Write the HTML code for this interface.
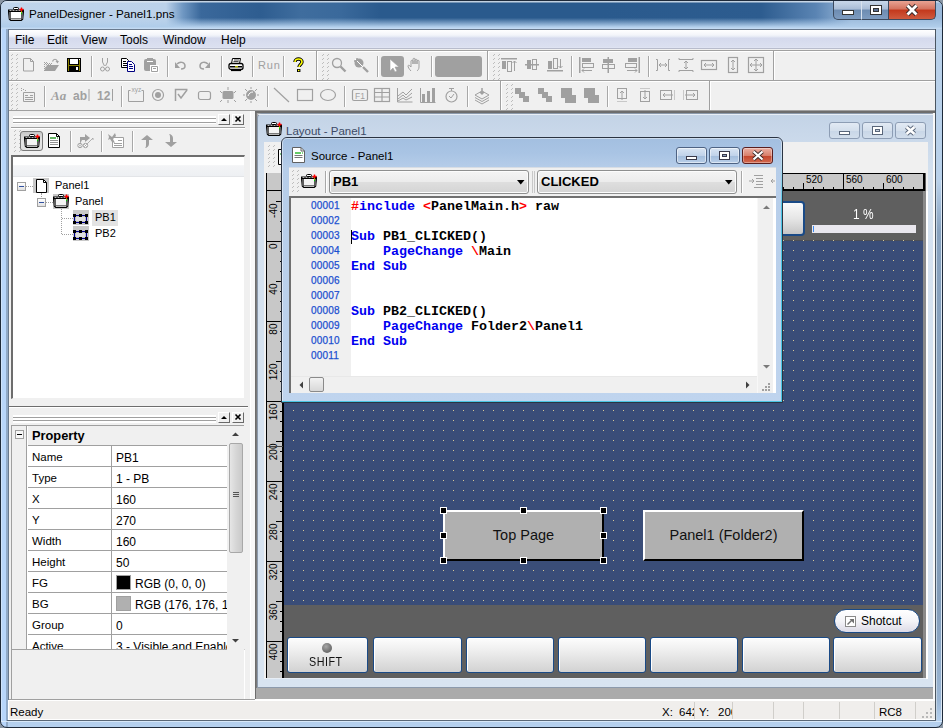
<!DOCTYPE html>
<html><head><meta charset="utf-8">
<style>
*{box-sizing:border-box;margin:0;padding:0}
html,body{width:943px;height:728px;overflow:hidden;background:#8a96a4;font-family:"Liberation Sans",sans-serif;font-size:12px;color:#000}
.a{position:absolute}
#frame{left:0;top:0;width:943px;height:728px;border:1px solid #1e2a3a;border-radius:7px 7px 7px 7px;background:linear-gradient(90deg,#e8f2fc 0,#b8d6fa 1px,#b8d6fa 5px,#6a7e95 6px,#b8d6fa 7px,transparent 7px),linear-gradient(180deg,#b9d1ea 0,#b9d1ea 180px,#88a2be 230px,#829cb8 600px,#9bb6d4 700px,#b5d0ee 720px)}
#title{left:1px;top:1px;width:941px;height:28px;border-radius:6px 6px 0 0;
background:linear-gradient(180deg,rgba(220,230,240,.85) 0,rgba(220,230,240,.85) 1px,rgba(185,209,234,0) 2px,rgba(185,209,234,0) 60%,rgba(176,205,234,1) 92%,rgba(200,222,245,1) 100%),
linear-gradient(90deg,#c0d5ec 0,#bcd2ea 165px,#6f97c2 182px,#3a689b 200px,#2e5d90 260px,#3f6d9e 300px,#3a699b 340px,#2a5a8d 380px,#2a5a8d 600px,#2d5c8f 760px,#5a84b3 815px,#9ab9da 850px)}
#titletxt{left:29px;top:7px;font-size:11.7px;color:#000;white-space:nowrap}
.cb{top:1px;height:19px;border:1px solid #3c4a5e;border-top:none}
#client{left:8px;top:29px;width:928px;height:691px;background:#f0f0f0;border:1px solid #6a7a8e}
#menubar{left:9px;top:30px;width:926px;height:19px;background:linear-gradient(180deg,#ffffff 0,#f3f5fa 5px,#e4e8f4 7px,#d5daed 8px,#dbe0f0 17px,#e2e6f4 18px);border-bottom:1px solid #b8bccc}
.mi{top:33px;font-size:12px;color:#000}
.grip{background-image:linear-gradient(135deg,transparent 1px,transparent 0),radial-gradient(circle at 1px 1px,#a0a0a0 0.8px,transparent 1.1px);background-size:5px 4px;background-position:1px 1px}
svg{position:absolute;overflow:visible}
.ic{width:16px;height:16px}
</style></head><body>
<div id="frame" class="a"></div>
<div class="a" style="left:936px;top:180px;width:1px;height:540px;background:#c4d4e4"></div><div class="a" style="left:941px;top:180px;width:1px;height:540px;background:#dce8f4"></div><div class="a" style="left:1px;top:721px;width:941px;height:1px;background:#d8e8f8"></div>
<div id="title" class="a"></div>
<svg style="left:8px;top:7px" width="16" height="16" viewBox="0 0 16 16"><rect x="5.5" y="0.5" width="5" height="2" rx="1" fill="#fff" stroke="#000"/><path d="M0 2.5h16v2.5l-0.8 7.5l-1.7 1.5h-11l-1.7-1.5l-0.8-7.5z" fill="#000"/><path d="M1.5 3.5h12" stroke="#e0e0e0" stroke-width=".8" stroke-dasharray="2 1"/><path d="M2 5v6.5l1 1h10l1-1V5" fill="none" stroke="#e8e8e8" stroke-width=".8"/><rect x="3" y="5" width="10" height="6.5" fill="#fff"/><path d="M13.5 0.5v4M11.5 2.5h4" stroke="#f00" stroke-width="1.4"/><rect x="13" y="4.5" width="1" height="1.2" fill="#ee0"/><rect x="13" y="5.7" width="1" height="1.5" fill="#0c0"/></svg>
<div id="titletxt" class="a">PanelDesigner - Panel1.pns</div>
<div class="a cb" style="left:833px;width:29px;border-radius:0 0 0 5px;background:linear-gradient(180deg,#c9d8ea 0,#a9bdd6 45%,#6d8cb2 50%,#7e9cc0 100%)"></div>
<div class="a cb" style="left:861px;width:28px;border-left:1px solid #d8e2ee;background:linear-gradient(180deg,#c9d8ea 0,#a9bdd6 45%,#6d8cb2 50%,#7e9cc0 100%)"></div>
<div class="a cb" style="left:888px;width:48px;border-radius:0 0 5px 0;background:linear-gradient(180deg,#e8a393 0,#d4725e 45%,#c3381c 50%,#cf5b3f 100%)"></div>
<div class="a" style="left:842px;top:10px;width:12px;height:5px;background:#fff;border:1px solid #333"></div>
<div class="a" style="left:870px;top:5px;width:12px;height:10px;background:#fff;border:1px solid #333"></div>
<div class="a" style="left:873px;top:8px;width:6px;height:4px;background:#5a7094;border:1px solid #333"></div>
<svg style="left:905px;top:4px" width="14" height="12" viewBox="0 0 14 12"><path d="M2.5 1.5 L11.5 10.5 M11.5 1.5 L2.5 10.5" stroke="#3a2a2a" stroke-width="4.6"/><path d="M2.5 1.5 L11.5 10.5 M11.5 1.5 L2.5 10.5" stroke="#fff" stroke-width="2.8"/></svg>
<div id="client" class="a"></div>
<div id="menubar" class="a"></div>
<div class="a mi" style="left:15px">File</div>
<div class="a mi" style="left:47px">Edit</div>
<div class="a mi" style="left:81px">View</div>
<div class="a mi" style="left:120px">Tools</div>
<div class="a mi" style="left:163px">Window</div>
<div class="a mi" style="left:221px">Help</div>
<div class="a" style="left:9px;top:49px;width:926px;height:1px;background:#f0f0f0"></div><div class="a" style="left:9px;top:50px;width:926px;height:1px;background:#a0a0a0"></div><div class="a" style="left:9px;top:51px;width:926px;height:29px;background:#f0f0f0;border-top:1px solid #fff"></div>
<div class="a" style="left:9px;top:80px;width:926px;height:1px;background:#a0a0a0"></div>
<div class="a" style="left:9px;top:81px;width:926px;height:29px;background:#f0f0f0;border-top:1px solid #fff"></div>
<div class="a" style="left:9px;top:110px;width:926px;height:1px;background:#a0a0a0"></div>
<svg style="left:10px;top:54px" width="8" height="28" fill="#bdbdbd"><rect x="2" y="0" width="1" height="1"/><rect x="1" y="1" width="1" height="1"/><rect x="7" y="0" width="1" height="1"/><rect x="6" y="1" width="1" height="1"/><rect x="2" y="4" width="1" height="1"/><rect x="1" y="5" width="1" height="1"/><rect x="7" y="4" width="1" height="1"/><rect x="6" y="5" width="1" height="1"/><rect x="2" y="8" width="1" height="1"/><rect x="1" y="9" width="1" height="1"/><rect x="7" y="8" width="1" height="1"/><rect x="6" y="9" width="1" height="1"/><rect x="2" y="12" width="1" height="1"/><rect x="1" y="13" width="1" height="1"/><rect x="7" y="12" width="1" height="1"/><rect x="6" y="13" width="1" height="1"/><rect x="2" y="16" width="1" height="1"/><rect x="1" y="17" width="1" height="1"/><rect x="7" y="16" width="1" height="1"/><rect x="6" y="17" width="1" height="1"/><rect x="2" y="20" width="1" height="1"/><rect x="1" y="21" width="1" height="1"/><rect x="7" y="20" width="1" height="1"/><rect x="6" y="21" width="1" height="1"/><rect x="2" y="24" width="1" height="1"/><rect x="1" y="25" width="1" height="1"/><rect x="7" y="24" width="1" height="1"/><rect x="6" y="25" width="1" height="1"/></svg>
<svg style="left:321px;top:54px" width="8" height="28" fill="#bdbdbd"><rect x="2" y="0" width="1" height="1"/><rect x="1" y="1" width="1" height="1"/><rect x="7" y="0" width="1" height="1"/><rect x="6" y="1" width="1" height="1"/><rect x="2" y="4" width="1" height="1"/><rect x="1" y="5" width="1" height="1"/><rect x="7" y="4" width="1" height="1"/><rect x="6" y="5" width="1" height="1"/><rect x="2" y="8" width="1" height="1"/><rect x="1" y="9" width="1" height="1"/><rect x="7" y="8" width="1" height="1"/><rect x="6" y="9" width="1" height="1"/><rect x="2" y="12" width="1" height="1"/><rect x="1" y="13" width="1" height="1"/><rect x="7" y="12" width="1" height="1"/><rect x="6" y="13" width="1" height="1"/><rect x="2" y="16" width="1" height="1"/><rect x="1" y="17" width="1" height="1"/><rect x="7" y="16" width="1" height="1"/><rect x="6" y="17" width="1" height="1"/><rect x="2" y="20" width="1" height="1"/><rect x="1" y="21" width="1" height="1"/><rect x="7" y="20" width="1" height="1"/><rect x="6" y="21" width="1" height="1"/><rect x="2" y="24" width="1" height="1"/><rect x="1" y="25" width="1" height="1"/><rect x="7" y="24" width="1" height="1"/><rect x="6" y="25" width="1" height="1"/></svg>
<svg style="left:492px;top:54px" width="8" height="28" fill="#bdbdbd"><rect x="2" y="0" width="1" height="1"/><rect x="1" y="1" width="1" height="1"/><rect x="7" y="0" width="1" height="1"/><rect x="6" y="1" width="1" height="1"/><rect x="2" y="4" width="1" height="1"/><rect x="1" y="5" width="1" height="1"/><rect x="7" y="4" width="1" height="1"/><rect x="6" y="5" width="1" height="1"/><rect x="2" y="8" width="1" height="1"/><rect x="1" y="9" width="1" height="1"/><rect x="7" y="8" width="1" height="1"/><rect x="6" y="9" width="1" height="1"/><rect x="2" y="12" width="1" height="1"/><rect x="1" y="13" width="1" height="1"/><rect x="7" y="12" width="1" height="1"/><rect x="6" y="13" width="1" height="1"/><rect x="2" y="16" width="1" height="1"/><rect x="1" y="17" width="1" height="1"/><rect x="7" y="16" width="1" height="1"/><rect x="6" y="17" width="1" height="1"/><rect x="2" y="20" width="1" height="1"/><rect x="1" y="21" width="1" height="1"/><rect x="7" y="20" width="1" height="1"/><rect x="6" y="21" width="1" height="1"/><rect x="2" y="24" width="1" height="1"/><rect x="1" y="25" width="1" height="1"/><rect x="7" y="24" width="1" height="1"/><rect x="6" y="25" width="1" height="1"/></svg>
<div class="a" style="left:91px;top:56px;width:1px;height:21px;background:#a8a8a8"></div><div class="a" style="left:92px;top:56px;width:1px;height:21px;background:#fff"></div>
<div class="a" style="left:167px;top:56px;width:1px;height:21px;background:#a8a8a8"></div><div class="a" style="left:168px;top:56px;width:1px;height:21px;background:#fff"></div>
<div class="a" style="left:221px;top:56px;width:1px;height:21px;background:#a8a8a8"></div><div class="a" style="left:222px;top:56px;width:1px;height:21px;background:#fff"></div>
<div class="a" style="left:252px;top:56px;width:1px;height:21px;background:#a8a8a8"></div><div class="a" style="left:253px;top:56px;width:1px;height:21px;background:#fff"></div>
<div class="a" style="left:283px;top:56px;width:1px;height:21px;background:#a8a8a8"></div><div class="a" style="left:284px;top:56px;width:1px;height:21px;background:#fff"></div>
<div class="a" style="left:377px;top:56px;width:1px;height:21px;background:#a8a8a8"></div><div class="a" style="left:378px;top:56px;width:1px;height:21px;background:#fff"></div>
<div class="a" style="left:431px;top:56px;width:1px;height:21px;background:#a8a8a8"></div><div class="a" style="left:432px;top:56px;width:1px;height:21px;background:#fff"></div>
<div class="a" style="left:571px;top:56px;width:1px;height:21px;background:#a8a8a8"></div><div class="a" style="left:572px;top:56px;width:1px;height:21px;background:#fff"></div>
<div class="a" style="left:648px;top:56px;width:1px;height:21px;background:#a8a8a8"></div><div class="a" style="left:649px;top:56px;width:1px;height:21px;background:#fff"></div>
<div class="a" style="left:316px;top:51px;width:1px;height:29px;background:#a0a0a0"></div><div class="a" style="left:317px;top:51px;width:1px;height:29px;background:#fff"></div>
<div class="a" style="left:487px;top:51px;width:1px;height:29px;background:#a0a0a0"></div><div class="a" style="left:488px;top:51px;width:1px;height:29px;background:#fff"></div>
<div class="a" style="left:773px;top:51px;width:1px;height:29px;background:#a0a0a0"></div><div class="a" style="left:774px;top:51px;width:1px;height:29px;background:#fff"></div>
<svg style="left:10px;top:84px" width="8" height="28" fill="#bdbdbd"><rect x="2" y="0" width="1" height="1"/><rect x="1" y="1" width="1" height="1"/><rect x="7" y="0" width="1" height="1"/><rect x="6" y="1" width="1" height="1"/><rect x="2" y="4" width="1" height="1"/><rect x="1" y="5" width="1" height="1"/><rect x="7" y="4" width="1" height="1"/><rect x="6" y="5" width="1" height="1"/><rect x="2" y="8" width="1" height="1"/><rect x="1" y="9" width="1" height="1"/><rect x="7" y="8" width="1" height="1"/><rect x="6" y="9" width="1" height="1"/><rect x="2" y="12" width="1" height="1"/><rect x="1" y="13" width="1" height="1"/><rect x="7" y="12" width="1" height="1"/><rect x="6" y="13" width="1" height="1"/><rect x="2" y="16" width="1" height="1"/><rect x="1" y="17" width="1" height="1"/><rect x="7" y="16" width="1" height="1"/><rect x="6" y="17" width="1" height="1"/><rect x="2" y="20" width="1" height="1"/><rect x="1" y="21" width="1" height="1"/><rect x="7" y="20" width="1" height="1"/><rect x="6" y="21" width="1" height="1"/><rect x="2" y="24" width="1" height="1"/><rect x="1" y="25" width="1" height="1"/><rect x="7" y="24" width="1" height="1"/><rect x="6" y="25" width="1" height="1"/></svg>
<svg style="left:505px;top:84px" width="8" height="28" fill="#bdbdbd"><rect x="2" y="0" width="1" height="1"/><rect x="1" y="1" width="1" height="1"/><rect x="7" y="0" width="1" height="1"/><rect x="6" y="1" width="1" height="1"/><rect x="2" y="4" width="1" height="1"/><rect x="1" y="5" width="1" height="1"/><rect x="7" y="4" width="1" height="1"/><rect x="6" y="5" width="1" height="1"/><rect x="2" y="8" width="1" height="1"/><rect x="1" y="9" width="1" height="1"/><rect x="7" y="8" width="1" height="1"/><rect x="6" y="9" width="1" height="1"/><rect x="2" y="12" width="1" height="1"/><rect x="1" y="13" width="1" height="1"/><rect x="7" y="12" width="1" height="1"/><rect x="6" y="13" width="1" height="1"/><rect x="2" y="16" width="1" height="1"/><rect x="1" y="17" width="1" height="1"/><rect x="7" y="16" width="1" height="1"/><rect x="6" y="17" width="1" height="1"/><rect x="2" y="20" width="1" height="1"/><rect x="1" y="21" width="1" height="1"/><rect x="7" y="20" width="1" height="1"/><rect x="6" y="21" width="1" height="1"/><rect x="2" y="24" width="1" height="1"/><rect x="1" y="25" width="1" height="1"/><rect x="7" y="24" width="1" height="1"/><rect x="6" y="25" width="1" height="1"/></svg>
<div class="a" style="left:44px;top:86px;width:1px;height:21px;background:#a8a8a8"></div><div class="a" style="left:45px;top:86px;width:1px;height:21px;background:#fff"></div>
<div class="a" style="left:121px;top:86px;width:1px;height:21px;background:#a8a8a8"></div><div class="a" style="left:122px;top:86px;width:1px;height:21px;background:#fff"></div>
<div class="a" style="left:267px;top:86px;width:1px;height:21px;background:#a8a8a8"></div><div class="a" style="left:268px;top:86px;width:1px;height:21px;background:#fff"></div>
<div class="a" style="left:344px;top:86px;width:1px;height:21px;background:#a8a8a8"></div><div class="a" style="left:345px;top:86px;width:1px;height:21px;background:#fff"></div>
<div class="a" style="left:467px;top:86px;width:1px;height:21px;background:#a8a8a8"></div><div class="a" style="left:468px;top:86px;width:1px;height:21px;background:#fff"></div>
<div class="a" style="left:607px;top:86px;width:1px;height:21px;background:#a8a8a8"></div><div class="a" style="left:608px;top:86px;width:1px;height:21px;background:#fff"></div>
<div class="a" style="left:500px;top:81px;width:1px;height:29px;background:#a0a0a0"></div><div class="a" style="left:501px;top:81px;width:1px;height:29px;background:#fff"></div>
<div class="a" style="left:709px;top:81px;width:1px;height:29px;background:#a0a0a0"></div><div class="a" style="left:710px;top:81px;width:1px;height:29px;background:#fff"></div>
<!-- TB1 icons -->
<svg style="left:20px;top:57px" class="ic" viewBox="0 0 16 16"><path d="M3.5 1.5h7l3 3v9.5h-10z" fill="none" stroke="#a0a0a0"/><path d="M10.5 1.5v3h3" fill="none" stroke="#a0a0a0"/></svg>
<svg style="left:43px;top:57px" class="ic" viewBox="0 0 16 16"><defs><pattern id="chk" width="2" height="2" patternUnits="userSpaceOnUse"><rect width="1" height="1" fill="#a0a0a0"/><rect x="1" y="1" width="1" height="1" fill="#a0a0a0"/></pattern></defs><path d="M1 5h3l1 1h4v2H1z" fill="url(#chk)"/><path d="M1 5v9h3z" fill="url(#chk)"/><path d="M1 14l3-6h12l-4 6z" fill="#a0a0a0"/><path d="M9.5 4.5c1-3 4-3 5 0" fill="none" stroke="#a0a0a0" stroke-width="1.2"/><path d="M12.5 4h3.5l-1.5 2.5z" fill="#a0a0a0"/></svg>
<svg style="left:66px;top:57px" class="ic" viewBox="0 0 16 16"><rect x="1" y="1" width="14" height="14" fill="#000"/><rect x="2" y="2" width="1" height="12" fill="#8a8000"/><rect x="13" y="2" width="1" height="12" fill="#8a8000"/><rect x="2" y="8" width="12" height="1" fill="#8a8000"/><rect x="4" y="2" width="8" height="5" fill="#fff"/><rect x="10" y="10" width="2" height="3" fill="#fff"/><rect x="13" y="2" width="1" height="1" fill="#fff"/></svg>
<svg style="left:97px;top:57px" class="ic" viewBox="0 0 16 16"><path d="M5.5 1v4l2 4M10.5 1v4l-2 4" fill="none" stroke="#a0a0a0"/><circle cx="5.5" cy="12" r="2" fill="none" stroke="#a0a0a0"/><circle cx="10.5" cy="12" r="2" fill="none" stroke="#a0a0a0"/></svg>
<svg style="left:120px;top:57px" class="ic" viewBox="0 0 16 16"><path d="M1.5 1.5h5l2 2v7h-7z" fill="#fff" stroke="#000"/><path d="M3 4.5h3M3 6.5h4M3 8.5h4" stroke="#000"/><path d="M7.5 4.5h4l3 3v7h-7z" fill="#fff" stroke="#000080"/><path d="M9 7.5h3M9 9.5h4M9 11.5h4" stroke="#000080"/></svg>
<svg style="left:143px;top:57px" class="ic" viewBox="0 0 16 16"><rect x="1" y="2" width="12" height="12" rx="2" fill="#a0a0a0"/><rect x="4" y="1" width="6" height="2" fill="#a0a0a0"/><rect x="4" y="4" width="6" height="1" fill="#fff"/><rect x="7" y="8" width="9" height="8" fill="#fff"/><path d="M8.5 9.5h6v5h-6z" fill="none" stroke="#a0a0a0"/><path d="M10 11.5h3" stroke="#a0a0a0"/></svg>
<svg style="left:173px;top:57px" class="ic" viewBox="0 0 16 16"><path d="M4 7c3-3 8-2 8 2 0 2-2 3-4 3" fill="none" stroke="#a0a0a0" stroke-width="1.5"/><path d="M2 5v6h5z" fill="#a0a0a0"/></svg>
<svg style="left:196px;top:57px" class="ic" viewBox="0 0 16 16"><path d="M12 7c-3-3-8-2-8 2 0 2 2 3 4 3" fill="none" stroke="#a0a0a0" stroke-width="1.5"/><path d="M14 5v6H9z" fill="#a0a0a0"/></svg>
<svg style="left:228px;top:57px" class="ic" viewBox="0 0 16 16"><path d="M4.5 1.5h8l-1 5h-8z" fill="#fff" stroke="#000"/><path d="M6 3h5M5.5 4.5h5" stroke="#000" stroke-width=".7"/><rect x="1" y="6.5" width="14" height="6" rx="2" fill="#fff" stroke="#000" stroke-width="1.3"/><rect x="2" y="9" width="12" height="1.5" fill="#000"/><rect x="7" y="9.3" width="3" height="1" fill="#ff0"/><path d="M3 13.5h10" stroke="#000" stroke-width="1.2"/></svg>
<div class="a" style="left:258px;top:59px;font-family:'Liberation Sans',sans-serif;font-size:11px;color:#a0a0a0;letter-spacing:0.8px">Run</div>
<svg style="left:290px;top:57px" class="ic" viewBox="0 0 16 16"><path d="M5 5c0-4 7-4 7 0 0 2-3 3-3 5" fill="none" stroke="#000" stroke-width="3.4"/><path d="M5 5c0-4 7-4 7 0 0 2-3 3-3 5" fill="none" stroke="#ff0" stroke-width="1.6"/><rect x="7" y="12" width="3.4" height="3" fill="#000"/><rect x="8" y="12.8" width="1.4" height="1.4" fill="#ff0"/></svg>
<svg style="left:331px;top:57px" class="ic" viewBox="0 0 16 16"><circle cx="6" cy="6" r="4.5" fill="none" stroke="#a0a0a0" stroke-width="1.3"/><path d="M9.5 9.5l5 5" stroke="#a0a0a0" stroke-width="2.4"/></svg>
<svg style="left:353px;top:57px" class="ic" viewBox="0 0 16 16"><circle cx="6" cy="6" r="4.5" fill="#a0a0a0"/><path d="M10 10l5 5" stroke="#a0a0a0" stroke-width="2.4"/><path d="M2 2l8 8" stroke="#fff" stroke-width="1"/><path d="M1 4h3M4 1v3" stroke="#a0a0a0" stroke-width="1.5"/></svg>
<div class="a" style="left:381px;top:56px;width:23px;height:21px;background:#a0a0a0;border-radius:3px"></div>
<svg style="left:385px;top:58px" class="ic" viewBox="0 0 16 16"><path d="M5 1v12l3-3 2 4 2-1-2-4h4z" fill="#fff" stroke="#a0a0a0" stroke-width=".6"/></svg>
<svg style="left:407px;top:57px" class="ic" viewBox="0 0 16 16"><path d="M4 14c-2-2-3-4-3-5 0-1 1-1 2 0l1 1V4c0-1 2-1 2 0v3V2c0-1 2-1 2 0v5V3c0-1 2-1 2 0v4V4c0-1 2-1 2 0v6c0 2-1 3-2 4" fill="#f0f0f0" stroke="#a0a0a0"/></svg>
<div class="a" style="left:435px;top:56px;width:47px;height:21px;background:#a0a0a0;border-radius:3px"></div>
<svg style="left:501px;top:57px" class="ic" viewBox="0 0 16 16"><rect x="0" y="1" width="16" height="1.5" fill="#a0a0a0"/><rect x="1" y="4" width="4" height="8" fill="#a0a0a0"/><rect x="6.5" y="4.5" width="4" height="10" fill="none" stroke="#a0a0a0"/><path d="M13.5 14V4M11.5 6l2-2 2 2" fill="none" stroke="#a0a0a0"/></svg>
<svg style="left:524px;top:57px" class="ic" viewBox="0 0 16 16"><rect x="1" y="7" width="14" height="1.5" fill="#a0a0a0"/><rect x="3" y="3" width="4" height="9" fill="#a0a0a0"/><rect x="8.5" y="2.5" width="4" height="10" fill="#f0f0f0" stroke="#a0a0a0"/><rect x="8.5" y="7" width="4" height="1.5" fill="#a0a0a0"/></svg>
<svg style="left:547px;top:57px" class="ic" viewBox="0 0 16 16"><rect x="0" y="13" width="16" height="1.5" fill="#a0a0a0"/><rect x="1" y="4" width="4" height="8" fill="#a0a0a0"/><rect x="6.5" y="1.5" width="4" height="10" fill="none" stroke="#a0a0a0"/><path d="M13.5 2v9M11.5 9l2 2 2-2" fill="none" stroke="#a0a0a0"/></svg>
<svg style="left:578px;top:57px" class="ic" viewBox="0 0 16 16"><rect x="1" y="0" width="1.5" height="16" fill="#a0a0a0"/><rect x="4" y="1" width="9" height="4" fill="#a0a0a0"/><rect x="4.5" y="6.5" width="11" height="4" fill="none" stroke="#a0a0a0"/><path d="M14 13.5H4M6 11.5l-2 2 2 2" fill="none" stroke="#a0a0a0"/></svg>
<svg style="left:601px;top:57px" class="ic" viewBox="0 0 16 16"><rect x="6.5" y="0" width="1.5" height="16" fill="#a0a0a0"/><rect x="2" y="2" width="10" height="4" fill="#a0a0a0"/><rect x="1.5" y="7.5" width="12" height="4" fill="#f0f0f0" stroke="#a0a0a0"/><rect x="6.5" y="7.5" width="1.5" height="4" fill="#a0a0a0"/></svg>
<svg style="left:625px;top:57px" class="ic" viewBox="0 0 16 16"><rect x="13.5" y="0" width="1.5" height="16" fill="#a0a0a0"/><rect x="3" y="1" width="9" height="4" fill="#a0a0a0"/><rect x="0.5" y="6.5" width="11" height="4" fill="none" stroke="#a0a0a0"/><path d="M2 13.5h10M10 11.5l2 2-2 2" fill="none" stroke="#a0a0a0"/></svg>
<svg style="left:655px;top:57px" class="ic" viewBox="0 0 16 16"><path d="M1 2.5h1.5v11H1M15 2.5h-1.5v11H15M4 8h8M6 6l-2 2 2 2M10 6l2 2-2 2" fill="none" stroke="#a0a0a0"/></svg>
<svg style="left:678px;top:57px" class="ic" viewBox="0 0 16 16"><path d="M1 1v1.5h14V1M1 15v-1.5h14V15M8 4v8M6 6l2-2 2 2M6 10l2 2 2-2" fill="none" stroke="#a0a0a0"/></svg>
<svg style="left:701px;top:57px" class="ic" viewBox="0 0 16 16"><rect x="0.5" y="3.5" width="15" height="9" fill="none" stroke="#a0a0a0" stroke-width="1.2"/><path d="M3 8h10M5 6l-2 2 2 2M11 6l2 2-2 2" fill="none" stroke="#a0a0a0"/></svg>
<svg style="left:725px;top:57px" class="ic" viewBox="0 0 16 16"><rect x="3.5" y="0.5" width="9" height="15" fill="none" stroke="#a0a0a0" stroke-width="1.2"/><path d="M8 3v10M6 5l2-2 2 2M6 11l2 2 2-2" fill="none" stroke="#a0a0a0"/></svg>
<svg style="left:748px;top:57px" class="ic" viewBox="0 0 16 16"><rect x="0.5" y="0.5" width="15" height="15" fill="none" stroke="#a0a0a0" stroke-width="1.2"/><path d="M8 2v12M2 8h12M6 4l2-2 2 2M6 12l2 2 2-2M4 6l-2 2 2 2M12 6l2 2-2 2" fill="none" stroke="#a0a0a0"/></svg>
<!-- TB2 icons -->
<svg style="left:20px;top:87px" class="ic" viewBox="0 0 16 16"><g fill="#a0a0a0"><rect x="1" y="1" width="1" height="1"/><rect x="3" y="2" width="1" height="1"/><rect x="1" y="3" width="1" height="1"/><rect x="5" y="3" width="1" height="1"/></g><path d="M3.5 5.5h11v9h-11z" fill="none" stroke="#a0a0a0"/><path d="M5 8.5h3M10 8.5h3M5 10.5h8M5 12.5h8" stroke="#a0a0a0"/></svg>
<svg style="left:51px;top:87px" class="ic" viewBox="0 0 16 16"><text x="0" y="13" font-family="Liberation Serif" font-style="italic" font-weight="bold" font-size="13" fill="#a0a0a0">Aa</text></svg>
<svg style="left:73px;top:87px" class="ic" viewBox="0 0 16 16"><text x="0" y="13" font-family="Liberation Sans" font-weight="bold" font-size="12" fill="#a0a0a0">ab</text><rect x="15.5" y="2" width="1" height="12" fill="#a0a0a0"/></svg>
<svg style="left:97px;top:87px" class="ic" viewBox="0 0 16 16"><text x="0" y="13" font-family="Liberation Sans" font-weight="bold" font-size="12" fill="#a0a0a0">12</text><rect x="15" y="2" width="1" height="12" fill="#a0a0a0"/></svg>
<svg style="left:128px;top:87px" class="ic" viewBox="0 0 16 16"><path d="M2.5 3.5H0.5v11h15v-11h-2" fill="none" stroke="#a0a0a0"/><text x="3.5" y="4.5" font-family="Liberation Sans" font-size="6.5" fill="#a0a0a0">xyz</text></svg>
<svg style="left:151px;top:87px" class="ic" viewBox="0 0 16 16"><circle cx="7" cy="8" r="5.5" fill="none" stroke="#a0a0a0" stroke-width="1.2"/><circle cx="7" cy="8" r="3" fill="#a0a0a0"/></svg>
<svg style="left:174px;top:87px" class="ic" viewBox="0 0 16 16"><path d="M1.5 14V2.5h12" fill="none" stroke="#a0a0a0" stroke-width="1.5"/><path d="M4 7l3 4 6-8" fill="none" stroke="#a0a0a0" stroke-width="1.5"/></svg>
<svg style="left:197px;top:87px" class="ic" viewBox="0 0 16 16"><rect x="1.5" y="4.5" width="12" height="8" rx="2" fill="none" stroke="#a0a0a0" stroke-width="1.2"/></svg>
<svg style="left:220px;top:87px" class="ic" viewBox="0 0 16 16"><rect x="2.5" y="4" width="11" height="8" rx="1.5" fill="#a0a0a0"/><path d="M8 0v3M0 4l2 2M16 4l-2 2M0 15l2-2M16 15l-2-2M8 13v3" stroke="#a0a0a0"/></svg>
<svg style="left:243px;top:87px" class="ic" viewBox="0 0 16 16"><circle cx="8" cy="8" r="5" fill="#a0a0a0"/><path d="M8 0v2M8 14v2M0 8h2M14 8h2M2 2l2 2M14 2l-2 2M2 14l2-2M14 14l-2-2" stroke="#a0a0a0"/><path d="M5 9c1-3 3-4 5-4" stroke="#fff" fill="none"/></svg>
<svg style="left:274px;top:87px" class="ic" viewBox="0 0 16 16"><path d="M0 1l15 14" stroke="#a0a0a0" stroke-width="1.2"/></svg>
<svg style="left:297px;top:87px" class="ic" viewBox="0 0 16 16"><rect x="0.5" y="2.5" width="15" height="11" fill="none" stroke="#a0a0a0" stroke-width="1.2"/></svg>
<svg style="left:320px;top:87px" class="ic" viewBox="0 0 16 16"><ellipse cx="8" cy="8" rx="7.5" ry="5.5" fill="none" stroke="#a0a0a0" stroke-width="1.2"/></svg>
<svg style="left:352px;top:87px" class="ic" viewBox="0 0 16 16"><rect x="0.5" y="2.5" width="15" height="11" rx="1.5" fill="none" stroke="#a0a0a0" stroke-width="1.2"/><text x="3" y="11.5" font-family="Liberation Sans" font-size="8.5" fill="#a0a0a0">F1</text></svg>
<svg style="left:374px;top:87px" class="ic" viewBox="0 0 16 16"><rect x="0.5" y="1.5" width="15" height="13" fill="none" stroke="#a0a0a0" stroke-width="1.2"/><path d="M1 5.5h14M1 10h14M8 2v12" stroke="#a0a0a0" stroke-width="1.2"/></svg>
<svg style="left:397px;top:87px" class="ic" viewBox="0 0 16 16"><path d="M0.5 1v14h15" fill="none" stroke="#a0a0a0"/><path d="M1 9l5-4 3 3 6-6M1 12l5-4 3 3 6-5M1 14l5-3 3 2 6-3" fill="none" stroke="#a0a0a0"/></svg>
<svg style="left:420px;top:87px" class="ic" viewBox="0 0 16 16"><path d="M0.5 1v14.5h15" fill="none" stroke="#a0a0a0"/><rect x="2" y="7" width="3" height="8" fill="#a0a0a0"/><rect x="7" y="4" width="3" height="11" fill="#a0a0a0"/><rect x="12" y="1" width="3" height="14" fill="#a0a0a0"/></svg>
<svg style="left:444px;top:87px" class="ic" viewBox="0 0 16 16"><circle cx="7.5" cy="9.5" r="5.5" fill="none" stroke="#a0a0a0" stroke-width="1.2"/><path d="M5 1.5h5M7.5 2v2M5 9l2 2 3-4" fill="none" stroke="#a0a0a0"/></svg>
<svg style="left:474px;top:87px" class="ic" viewBox="0 0 16 16"><path d="M1 8l7-4 7 4-7 4z M1 10.5l7 4 7-4 M1 13l7 4 7-4" fill="none" stroke="#a0a0a0"/><path d="M8 1v6M6 5l2 2 2-2" fill="none" stroke="#a0a0a0" stroke-width="1.5"/></svg>
<svg style="left:514px;top:87px" class="ic" viewBox="0 0 16 16"><path d="M1 1h6v4h4v4h4v6H9v-4H5V7H1z" fill="#a0a0a0"/></svg>
<svg style="left:537px;top:87px" class="ic" viewBox="0 0 16 16"><path d="M1 1h6v4h4v4h4v6H9v-4H5V7H1z" fill="#a0a0a0"/></svg>
<svg style="left:560px;top:87px" class="ic" viewBox="0 0 16 16"><path d="M1 1h11v7h4v8H5V11H1z" fill="#a0a0a0"/></svg>
<svg style="left:583px;top:87px" class="ic" viewBox="0 0 16 16"><path d="M1 1h11v7h4v8H5V11H1z" fill="#a0a0a0"/></svg>
<svg style="left:613px;top:87px" class="ic" viewBox="0 0 16 16"><rect x="4.5" y="1.5" width="9" height="10" fill="none" stroke="#a0a0a0"/><path d="M4.5 14.5h9" stroke="#a0a0a0" stroke-dasharray="1 1"/><path d="M9 13V4M7 6l2-2 2 2" fill="none" stroke="#a0a0a0"/></svg>
<svg style="left:636px;top:87px" class="ic" viewBox="0 0 16 16"><rect x="4.5" y="4.5" width="9" height="10" fill="none" stroke="#a0a0a0"/><path d="M4.5 1.5h9" stroke="#a0a0a0" stroke-dasharray="1 1"/><path d="M9 3v9M7 10l2 2 2-2" fill="none" stroke="#a0a0a0"/></svg>
<svg style="left:660px;top:87px" class="ic" viewBox="0 0 16 16"><rect x="0.5" y="3.5" width="11" height="9" fill="none" stroke="#a0a0a0"/><path d="M14.5 3.5v9" stroke="#a0a0a0" stroke-dasharray="1 1"/><path d="M13 8H3M5 6L3 8l2 2" fill="none" stroke="#a0a0a0"/></svg>
<svg style="left:683px;top:87px" class="ic" viewBox="0 0 16 16"><rect x="3.5" y="3.5" width="11" height="9" fill="none" stroke="#a0a0a0"/><path d="M0.5 3.5v9" stroke="#a0a0a0" stroke-dasharray="1 1"/><path d="M2 8h10M10 6l2 2-2 2" fill="none" stroke="#a0a0a0"/></svg>
<!-- LEFT DOCK -->
<div class="a" style="left:9px;top:111px;width:242px;height:590px;background:#f0f0f0"></div>
<div class="a" style="left:250px;top:111px;width:1px;height:590px;background:#fff"></div>
<!-- dock 1 title -->
<div class="a" style="left:13px;top:116px;width:203px;height:8px;background:linear-gradient(180deg,#fff 0,#fff 2px,#a0a0a0 2px,#a0a0a0 3px,#fff 3px,#fff 6px,#a0a0a0 6px,#a0a0a0 7px,#fff 7px)"></div>
<div class="a" style="left:218px;top:114px;width:12px;height:11px;background:#f0f0f0;border:1px solid;border-color:#fff #696969 #696969 #fff"></div>
<svg style="left:218px;top:114px" width="12" height="11"><path d="M3 7h6L6 4z" fill="#000"/></svg>
<div class="a" style="left:232px;top:114px;width:12px;height:11px;background:#f0f0f0;border:1px solid;border-color:#fff #696969 #696969 #fff"></div>
<svg style="left:232px;top:114px" width="12" height="11"><path d="M3.5 2.5l5 5M8.5 2.5l-5 5" stroke="#000" stroke-width="1.6"/></svg>
<div class="a" style="left:11px;top:127px;width:234px;height:1px;background:#a0a0a0"></div>
<div class="a" style="left:11px;top:128px;width:234px;height:1px;background:#fff"></div>
<svg style="left:13px;top:130px" width="8" height="24" fill="#bdbdbd"><rect x="2" y="0" width="1" height="1"/><rect x="1" y="1" width="1" height="1"/><rect x="7" y="0" width="1" height="1"/><rect x="6" y="1" width="1" height="1"/><rect x="2" y="4" width="1" height="1"/><rect x="1" y="5" width="1" height="1"/><rect x="7" y="4" width="1" height="1"/><rect x="6" y="5" width="1" height="1"/><rect x="2" y="8" width="1" height="1"/><rect x="1" y="9" width="1" height="1"/><rect x="7" y="8" width="1" height="1"/><rect x="6" y="9" width="1" height="1"/><rect x="2" y="12" width="1" height="1"/><rect x="1" y="13" width="1" height="1"/><rect x="7" y="12" width="1" height="1"/><rect x="6" y="13" width="1" height="1"/><rect x="2" y="16" width="1" height="1"/><rect x="1" y="17" width="1" height="1"/><rect x="7" y="16" width="1" height="1"/><rect x="6" y="17" width="1" height="1"/><rect x="2" y="20" width="1" height="1"/><rect x="1" y="21" width="1" height="1"/><rect x="7" y="20" width="1" height="1"/><rect x="6" y="21" width="1" height="1"/></svg>
<div class="a" style="left:20px;top:131px;width:23px;height:20px;border:1px solid #7a7a7a;border-radius:3px;background:linear-gradient(180deg,#c8c8c8 0,#e6e6e6 50%,#e0e0e0 100%)"></div>
<svg style="left:24px;top:134px" width="16" height="16" viewBox="0 0 16 16"><rect x="5.5" y="0.5" width="5" height="2" rx="1" fill="#fff" stroke="#000"/><path d="M0 2.5h16v2.5l-0.8 7.5l-1.7 1.5h-11l-1.7-1.5l-0.8-7.5z" fill="#000"/><path d="M1.5 3.5h12" stroke="#e0e0e0" stroke-width=".8" stroke-dasharray="2 1"/><path d="M2 5v6.5l1 1h10l1-1V5" fill="none" stroke="#e8e8e8" stroke-width=".8"/><rect x="3" y="5" width="10" height="6.5" fill="#f4f4f4"/><path d="M13.5 0.5v4M11.5 2.5h4" stroke="#f00" stroke-width="1.4"/><rect x="13" y="4.5" width="1" height="1.2" fill="#ee0"/><rect x="13" y="5.7" width="1" height="1.5" fill="#0c0"/></svg>
<svg style="left:47px;top:133px" width="16" height="16" viewBox="0 0 16 16"><path d="M1.5 0.5h8l3 3v11h-11z" fill="#fff" stroke="#000"/><path d="M9.5 0.5v3h3" fill="none" stroke="#000"/><path d="M3 5h6" stroke="#080" stroke-width="1.2"/><rect x="10" y="4.5" width="1" height="1" fill="#080"/><path d="M3 7.5h8M3 9.5h8M3 11.5h8" stroke="#777" stroke-width=".8"/></svg>
<div class="a" style="left:70px;top:131px;width:1px;height:21px;background:#a8a8a8"></div><div class="a" style="left:71px;top:131px;width:1px;height:21px;background:#fff"></div>
<div class="a" style="left:101px;top:131px;width:1px;height:21px;background:#a8a8a8"></div><div class="a" style="left:102px;top:131px;width:1px;height:21px;background:#fff"></div>
<div class="a" style="left:132px;top:131px;width:1px;height:21px;background:#a8a8a8"></div><div class="a" style="left:133px;top:131px;width:1px;height:21px;background:#fff"></div>
<svg style="left:77px;top:133px" width="17" height="16" viewBox="0 0 17 16"><path d="M3 4h5V1l5 4-5 4V7H5l-2 4z" fill="#a0a0a0"/><circle cx="3" cy="12.5" r="2.2" fill="#fff" stroke="#a0a0a0"/><circle cx="8.5" cy="12.5" r="2.2" fill="#fff" stroke="#a0a0a0"/><path d="M1.8 11.3l2.4 2.4M4.2 11.3l-2.4 2.4M7.3 11.3l2.4 2.4M9.7 11.3l-2.4 2.4" stroke="#a0a0a0" stroke-width=".8"/><path d="M10 11l6-6v2" fill="none" stroke="#a0a0a0" stroke-width=".8"/></svg>
<svg style="left:108px;top:133px" width="16" height="16" viewBox="0 0 16 16"><path d="M4.5 4.5h11v10h-11z" fill="#fff" stroke="#a0a0a0"/><path d="M6 10.5h8M6 12.5h8M10 7.5h4" stroke="#a0a0a0"/><path d="M0 1l4 3 3-4 1 3-3 3 2 4-3-1-2-3-2 1 1-3z" fill="#a0a0a0"/></svg>
<svg style="left:141px;top:135px" width="12" height="13" viewBox="0 0 12 13"><path d="M6 0l6 5H8v4c0 2-2 4-4 4 1-1 1-2 1-4V5H0z" fill="#a0a0a0"/></svg>
<svg style="left:165px;top:134px" width="12" height="13" viewBox="0 0 12 13"><path d="M6 13l6-5H8V4c0-2-2-4-4-4 1 1 1 2 1 4v4H0z" fill="#a0a0a0"/></svg>
<!-- tree -->
<div class="a" style="left:11px;top:155px;width:234px;height:244px;background:#fff;border-top:2px solid #6d6d6d;border-left:2px solid #6d6d6d;border-right:1px solid #f0f0f0;border-bottom:1px solid #f0f0f0"></div>
<div class="a" style="left:13px;top:158px;width:231px;height:19px;background:linear-gradient(180deg,#fff 0,#fff 40%,#f3f4f6 42%,#eef0f3 100%);border-bottom:1px solid #e3e5e8"></div>
<!-- tree lines -->
<div class="a" style="left:26px;top:186px;width:7px;height:1px;border-top:1px dotted #a0a0a0"></div>
<div class="a" style="left:41px;top:193px;width:1px;height:6px;border-left:1px dotted #a0a0a0"></div>
<div class="a" style="left:46px;top:202px;width:7px;height:1px;border-top:1px dotted #a0a0a0"></div>
<div class="a" style="left:61px;top:209px;width:1px;height:25px;border-left:1px dotted #a0a0a0"></div>
<div class="a" style="left:62px;top:218px;width:11px;height:1px;border-top:1px dotted #a0a0a0"></div>
<div class="a" style="left:62px;top:234px;width:11px;height:1px;border-top:1px dotted #a0a0a0"></div>
<div class="a" style="left:17px;top:182px;width:9px;height:9px;border:1px solid #a0a0a0;background:linear-gradient(180deg,#fff,#e0e0e0)"></div>
<div class="a" style="left:19px;top:186px;width:5px;height:1px;background:#3050a0"></div>
<div class="a" style="left:37px;top:198px;width:9px;height:9px;border:1px solid #a0a0a0;background:linear-gradient(180deg,#fff,#e0e0e0)"></div>
<div class="a" style="left:39px;top:202px;width:5px;height:1px;background:#3050a0"></div>
<div class="a" style="left:33px;top:178px;width:16px;height:15px;background:#c8c8c8"></div>
<svg style="left:36px;top:179px" width="11" height="14" viewBox="0 0 11 14"><path d="M0.5 0.5h7l3 3v10h-10z" fill="#fff" stroke="#000"/><path d="M7.5 0.5v3h3" fill="none" stroke="#000"/></svg>
<div class="a" style="left:55px;top:179px;font-size:11px">Panel1</div>
<div class="a" style="left:53px;top:194px;width:16px;height:15px;background:#c8c8c8"></div>
<svg style="left:53px;top:194px" width="16" height="16" viewBox="0 0 16 16"><rect x="5.5" y="0.5" width="5" height="2" rx="1" fill="#fff" stroke="#000"/><path d="M0 2.5h16v2.5l-0.8 7.5l-1.7 1.5h-11l-1.7-1.5l-0.8-7.5z" fill="#000"/><path d="M1.5 3.5h12" stroke="#e0e0e0" stroke-width=".8" stroke-dasharray="2 1"/><path d="M2 5v6.5l1 1h10l1-1V5" fill="none" stroke="#e8e8e8" stroke-width=".8"/><rect x="3" y="5" width="10" height="6.5" fill="#f4f4f4"/><path d="M13.5 0.5v4M11.5 2.5h4" stroke="#f00" stroke-width="1.4"/><rect x="13" y="4.5" width="1" height="1.2" fill="#ee0"/><rect x="13" y="5.7" width="1" height="1.5" fill="#0c0"/></svg>
<div class="a" style="left:75px;top:195px;font-size:11px">Panel</div>
<div class="a" style="left:73px;top:210px;width:16px;height:15px;background:#c8c8c8"></div>
<svg style="left:73px;top:210px" width="16" height="15" viewBox="0 0 16 15"><rect x="1.5" y="5.5" width="12" height="7" fill="#c0c0c0" stroke="#000090"/><rect x="3" y="7" width="9" height="4" fill="#e0e0e0"/><g fill="#000"><rect x="0" y="4" width="3" height="3"/><rect x="6" y="4" width="3" height="3"/><rect x="12" y="4" width="3" height="3"/><rect x="0" y="11" width="3" height="3"/><rect x="6" y="11" width="3" height="3"/><rect x="12" y="11" width="3" height="3"/></g></svg>
<div class="a" style="left:92px;top:210px;width:26px;height:16px;background:#e3e3e3"></div>
<div class="a" style="left:95px;top:211px;font-size:11px">PB1</div>
<div class="a" style="left:73px;top:226px;width:16px;height:15px;background:#c8c8c8"></div>
<svg style="left:73px;top:226px" width="16" height="15" viewBox="0 0 16 15"><rect x="1.5" y="5.5" width="12" height="7" fill="#c0c0c0" stroke="#000090"/><rect x="3" y="7" width="9" height="4" fill="#e0e0e0"/><g fill="#000"><rect x="0" y="4" width="3" height="3"/><rect x="6" y="4" width="3" height="3"/><rect x="12" y="4" width="3" height="3"/><rect x="0" y="11" width="3" height="3"/><rect x="6" y="11" width="3" height="3"/><rect x="12" y="11" width="3" height="3"/></g></svg>
<div class="a" style="left:95px;top:227px;font-size:11px">PB2</div>
<!-- splitter -->
<div class="a" style="left:9px;top:406px;width:239px;height:1px;background:#6d6d6d"></div>
<div class="a" style="left:9px;top:407px;width:239px;height:1px;background:#fff"></div>
<!-- dock 2 title -->
<div class="a" style="left:13px;top:415px;width:203px;height:8px;background:linear-gradient(180deg,#fff 0,#fff 2px,#a0a0a0 2px,#a0a0a0 3px,#fff 3px,#fff 5px,#a0a0a0 5px,#a0a0a0 6px,#fff 6px)"></div>
<div class="a" style="left:218px;top:412px;width:12px;height:11px;background:#f0f0f0;border:1px solid;border-color:#fff #696969 #696969 #fff"></div>
<svg style="left:218px;top:412px" width="12" height="11"><path d="M3 7h6L6 4z" fill="#000"/></svg>
<div class="a" style="left:232px;top:412px;width:12px;height:11px;background:#f0f0f0;border:1px solid;border-color:#fff #696969 #696969 #fff"></div>
<svg style="left:232px;top:412px" width="12" height="11"><path d="M3.5 2.5l5 5M8.5 2.5l-5 5" stroke="#000" stroke-width="1.6"/></svg>
<!-- PROPERTY GRID -->
<div class="a" style="left:11px;top:425px;width:233px;height:225px;background:#fff;border-top:1px solid #a0a0a0;border-left:1px solid #a0a0a0"></div>
<div class="a" style="left:12px;top:426px;width:15px;height:224px;background:#f0f0f0;border-right:1px solid #a0a0a0"></div>
<div class="a" style="left:28px;top:426px;width:199px;height:19px;background:#f0f0f0"></div>
<div class="a" style="left:15px;top:430px;width:9px;height:9px;border:1px solid #a0a0a0;background:#f8f8f8"></div>
<div class="a" style="left:17px;top:434px;width:5px;height:1px;background:#000"></div>
<div class="a" style="left:32px;top:428px;font-size:12.8px;font-weight:bold">Property</div>
<div class="a" style="left:28px;top:445px;width:199px;height:1px;background:#a0a0a0"></div>
<div class="a" style="left:111px;top:446px;width:1px;height:204px;background:#a0a0a0"></div>
<div class="a" style="left:28px;top:466px;width:199px;height:1px;background:#a0a0a0"></div>
<div class="a" style="left:32px;top:451px;font-size:11.5px">Name</div>
<div class="a" style="left:116px;top:451px;width:111px;overflow:hidden;white-space:nowrap;font-size:12px">PB1</div>
<div class="a" style="left:28px;top:487px;width:199px;height:1px;background:#a0a0a0"></div>
<div class="a" style="left:32px;top:472px;font-size:11.5px">Type</div>
<div class="a" style="left:116px;top:472px;width:111px;overflow:hidden;white-space:nowrap;font-size:12px">1 - PB</div>
<div class="a" style="left:28px;top:508px;width:199px;height:1px;background:#a0a0a0"></div>
<div class="a" style="left:32px;top:493px;font-size:11.5px">X</div>
<div class="a" style="left:116px;top:493px;width:111px;overflow:hidden;white-space:nowrap;font-size:12px">160</div>
<div class="a" style="left:28px;top:529px;width:199px;height:1px;background:#a0a0a0"></div>
<div class="a" style="left:32px;top:514px;font-size:11.5px">Y</div>
<div class="a" style="left:116px;top:514px;width:111px;overflow:hidden;white-space:nowrap;font-size:12px">270</div>
<div class="a" style="left:28px;top:550px;width:199px;height:1px;background:#a0a0a0"></div>
<div class="a" style="left:32px;top:535px;font-size:11.5px">Width</div>
<div class="a" style="left:116px;top:535px;width:111px;overflow:hidden;white-space:nowrap;font-size:12px">160</div>
<div class="a" style="left:28px;top:571px;width:199px;height:1px;background:#a0a0a0"></div>
<div class="a" style="left:32px;top:556px;font-size:11.5px">Height</div>
<div class="a" style="left:116px;top:556px;width:111px;overflow:hidden;white-space:nowrap;font-size:12px">50</div>
<div class="a" style="left:28px;top:592px;width:199px;height:1px;background:#a0a0a0"></div>
<div class="a" style="left:32px;top:577px;font-size:11.5px">FG</div>
<div class="a" style="left:116px;top:575px;width:15px;height:15px;background:#000;border:1px solid #a0a0a0"></div>
<div class="a" style="left:135px;top:577px;width:92px;overflow:hidden;white-space:nowrap;font-size:12px">RGB (0, 0, 0)</div>
<div class="a" style="left:28px;top:613px;width:199px;height:1px;background:#a0a0a0"></div>
<div class="a" style="left:32px;top:598px;font-size:11.5px">BG</div>
<div class="a" style="left:116px;top:596px;width:15px;height:15px;background:#b0b0b0;border:1px solid #a0a0a0"></div>
<div class="a" style="left:135px;top:598px;width:92px;overflow:hidden;white-space:nowrap;font-size:12px">RGB (176, 176, 176)</div>
<div class="a" style="left:28px;top:634px;width:199px;height:1px;background:#a0a0a0"></div>
<div class="a" style="left:32px;top:619px;font-size:11.5px">Group</div>
<div class="a" style="left:116px;top:619px;width:111px;overflow:hidden;white-space:nowrap;font-size:12px">0</div>
<div class="a" style="left:28px;top:655px;width:199px;height:1px;background:#a0a0a0"></div>
<div class="a" style="left:32px;top:640px;font-size:11.5px">Active</div>
<div class="a" style="left:116px;top:640px;width:111px;overflow:hidden;white-space:nowrap;font-size:12px">3 - Visible and Enabled</div>
<div class="a" style="left:11px;top:649px;width:234px;height:50px;background:#f0f0f0;border-top:1px solid #a0a0a0;border-left:1px solid #a0a0a0;border-right:1px solid #fff"></div>
<div class="a" style="left:227px;top:426px;width:17px;height:224px;background:#f0f0f0"></div>
<svg style="left:227px;top:426px" width="17" height="17"><path d="M5 10h7L8.5 6.5z" fill="#404040"/></svg>
<div class="a" style="left:229px;top:443px;width:14px;height:110px;border:1px solid #a8a8a8;border-radius:2px;background:linear-gradient(90deg,#e6e6e6,#d6d6d6 50%,#cacaca)"></div>
<svg style="left:229px;top:490px" width="14" height="10"><path d="M4 2.5h6M4 4.5h6M4 6.5h6" stroke="#555" stroke-width="1"/></svg>
<svg style="left:227px;top:633px" width="17" height="17"><path d="M5 6h7L8.5 9.5z" fill="#404040"/></svg>
<div class="a" style="left:251px;top:111px;width:4px;height:589px;background:#f8f8f8"></div>
<div class="a" style="left:255px;top:111px;width:681px;height:589px;background:#ababab;border-left:1px solid #6d6d6d;border-top:2px solid #6d6d6d"></div>
<div class="a" style="left:256px;top:113px;width:1px;height:575px;background:#7a7a7a"></div>
<div class="a" style="left:257px;top:113px;width:678px;height:575px;border:1px solid #8c9aac;border-radius:5px 5px 0 0;background:linear-gradient(180deg,#c3d3e6 0,#c9d8ea 20px,#d4e1ef 60px,#d8e4f1 100%)"></div>
<div class="a" style="left:258px;top:114px;width:676px;height:1px;background:#e8eef6;border-radius:4px 4px 0 0"></div>
<svg style="left:266px;top:122px" width="16" height="16" viewBox="0 0 16 16"><rect x="5.5" y="0.5" width="5" height="2" rx="1" fill="#fff" stroke="#000"/><path d="M0 2.5h16v2.5l-0.8 7.5l-1.7 1.5h-11l-1.7-1.5l-0.8-7.5z" fill="#000"/><path d="M1.5 3.5h12" stroke="#e0e0e0" stroke-width=".8" stroke-dasharray="2 1"/><path d="M2 5v6.5l1 1h10l1-1V5" fill="none" stroke="#e8e8e8" stroke-width=".8"/><rect x="3" y="5" width="10" height="6.5" fill="#f4f4f4"/><path d="M13.5 0.5v4M11.5 2.5h4" stroke="#f00" stroke-width="1.4"/><rect x="13" y="4.5" width="1" height="1.2" fill="#ee0"/><rect x="13" y="5.7" width="1" height="1.5" fill="#0c0"/></svg>
<div class="a" style="left:286px;top:125px;font-size:11.5px;color:#3c4a66;white-space:nowrap">Layout - Panel1</div>
<div class="a" style="left:829px;top:122px;width:31px;height:17px;border:1px solid #8d9db4;border-radius:3px;background:linear-gradient(180deg,#e2eaf4 0,#d4dfec 50%,#c8d6e7 51%,#d2deec 100%)"></div>
<div class="a" style="left:862px;top:122px;width:31px;height:17px;border:1px solid #8d9db4;border-radius:3px;background:linear-gradient(180deg,#e2eaf4 0,#d4dfec 50%,#c8d6e7 51%,#d2deec 100%)"></div>
<div class="a" style="left:895px;top:122px;width:31px;height:17px;border:1px solid #8d9db4;border-radius:3px;background:linear-gradient(180deg,#e2eaf4 0,#d4dfec 50%,#c8d6e7 51%,#d2deec 100%)"></div>
<div class="a" style="left:839px;top:131px;width:11px;height:4px;background:#fff;border:1px solid #59667a"></div>
<div class="a" style="left:872px;top:126px;width:11px;height:9px;background:#fff;border:1px solid #59667a"></div>
<div class="a" style="left:875px;top:129px;width:5px;height:3px;background:#c8d3e0;border:1px solid #59667a"></div>
<svg style="left:904px;top:125px" width="13" height="11"><path d="M2.5 2l8 7M10.5 2l-8 7" stroke="#59667a" stroke-width="4.4"/><path d="M2.5 2l8 7M10.5 2l-8 7" stroke="#fff" stroke-width="2.6"/></svg>
<div class="a" style="left:264px;top:142px;width:664px;height:537px;background:#f0f0f0"></div>
<svg style="left:267px;top:145px" width="8" height="24" fill="#bdbdbd"><rect x="2" y="0" width="1" height="1"/><rect x="1" y="1" width="1" height="1"/><rect x="7" y="0" width="1" height="1"/><rect x="6" y="1" width="1" height="1"/><rect x="2" y="4" width="1" height="1"/><rect x="1" y="5" width="1" height="1"/><rect x="7" y="4" width="1" height="1"/><rect x="6" y="5" width="1" height="1"/><rect x="2" y="8" width="1" height="1"/><rect x="1" y="9" width="1" height="1"/><rect x="7" y="8" width="1" height="1"/><rect x="6" y="9" width="1" height="1"/><rect x="2" y="12" width="1" height="1"/><rect x="1" y="13" width="1" height="1"/><rect x="7" y="12" width="1" height="1"/><rect x="6" y="13" width="1" height="1"/><rect x="2" y="16" width="1" height="1"/><rect x="1" y="17" width="1" height="1"/><rect x="7" y="16" width="1" height="1"/><rect x="6" y="17" width="1" height="1"/><rect x="2" y="20" width="1" height="1"/><rect x="1" y="21" width="1" height="1"/><rect x="7" y="20" width="1" height="1"/><rect x="6" y="21" width="1" height="1"/></svg>
<svg style="left:277px;top:149px" width="12" height="16" viewBox="0 0 12 16"><path d="M1.5 0.5h7l3 3v12h-10z" fill="#fff" stroke="#000"/><path d="M3 5h5" stroke="#080"/></svg>
<div class="a" style="left:266px;top:173px;width:660px;height:506px;background:#5f5f5f"></div>
<div class="a" style="left:266px;top:173px;width:659px;height:18px;background:#c8c8c8;border-top:1px solid #000;border-bottom:2px solid #000;border-left:1px solid #000"></div>
<div class="a" style="left:924px;top:173px;width:1px;height:18px;background:#000"></div>
<div class="a" style="left:266px;top:173px;width:18px;height:505px;background:#c8c8c8;border-left:1px solid #000;border-right:2px solid #000"></div>
<div class="a" style="left:266px;top:190px;width:18px;height:1px;background:#000"></div>
<div class="a" style="left:293px;top:187px;width:1px;height:3px;background:#000"></div>
<div class="a" style="left:303px;top:187px;width:1px;height:3px;background:#000"></div>
<div class="a" style="left:313px;top:187px;width:1px;height:3px;background:#000"></div>
<div class="a" style="left:323px;top:183px;width:1px;height:7px;background:#000"></div>
<div class="a" style="left:326px;top:174px;font-size:10px;color:#000">40</div>
<div class="a" style="left:333px;top:187px;width:1px;height:3px;background:#000"></div>
<div class="a" style="left:343px;top:187px;width:1px;height:3px;background:#000"></div>
<div class="a" style="left:353px;top:187px;width:1px;height:3px;background:#000"></div>
<div class="a" style="left:363px;top:173px;width:1px;height:17px;background:#000"></div>
<div class="a" style="left:366px;top:174px;font-size:10px;color:#000">80</div>
<div class="a" style="left:373px;top:187px;width:1px;height:3px;background:#000"></div>
<div class="a" style="left:383px;top:187px;width:1px;height:3px;background:#000"></div>
<div class="a" style="left:393px;top:187px;width:1px;height:3px;background:#000"></div>
<div class="a" style="left:403px;top:183px;width:1px;height:7px;background:#000"></div>
<div class="a" style="left:406px;top:174px;font-size:10px;color:#000">120</div>
<div class="a" style="left:413px;top:187px;width:1px;height:3px;background:#000"></div>
<div class="a" style="left:423px;top:187px;width:1px;height:3px;background:#000"></div>
<div class="a" style="left:433px;top:187px;width:1px;height:3px;background:#000"></div>
<div class="a" style="left:443px;top:173px;width:1px;height:17px;background:#000"></div>
<div class="a" style="left:446px;top:174px;font-size:10px;color:#000">160</div>
<div class="a" style="left:453px;top:187px;width:1px;height:3px;background:#000"></div>
<div class="a" style="left:463px;top:187px;width:1px;height:3px;background:#000"></div>
<div class="a" style="left:473px;top:187px;width:1px;height:3px;background:#000"></div>
<div class="a" style="left:483px;top:183px;width:1px;height:7px;background:#000"></div>
<div class="a" style="left:486px;top:174px;font-size:10px;color:#000">200</div>
<div class="a" style="left:493px;top:187px;width:1px;height:3px;background:#000"></div>
<div class="a" style="left:503px;top:187px;width:1px;height:3px;background:#000"></div>
<div class="a" style="left:513px;top:187px;width:1px;height:3px;background:#000"></div>
<div class="a" style="left:523px;top:173px;width:1px;height:17px;background:#000"></div>
<div class="a" style="left:526px;top:174px;font-size:10px;color:#000">240</div>
<div class="a" style="left:533px;top:187px;width:1px;height:3px;background:#000"></div>
<div class="a" style="left:543px;top:187px;width:1px;height:3px;background:#000"></div>
<div class="a" style="left:553px;top:187px;width:1px;height:3px;background:#000"></div>
<div class="a" style="left:563px;top:183px;width:1px;height:7px;background:#000"></div>
<div class="a" style="left:566px;top:174px;font-size:10px;color:#000">280</div>
<div class="a" style="left:573px;top:187px;width:1px;height:3px;background:#000"></div>
<div class="a" style="left:583px;top:187px;width:1px;height:3px;background:#000"></div>
<div class="a" style="left:593px;top:187px;width:1px;height:3px;background:#000"></div>
<div class="a" style="left:603px;top:173px;width:1px;height:17px;background:#000"></div>
<div class="a" style="left:606px;top:174px;font-size:10px;color:#000">320</div>
<div class="a" style="left:613px;top:187px;width:1px;height:3px;background:#000"></div>
<div class="a" style="left:623px;top:187px;width:1px;height:3px;background:#000"></div>
<div class="a" style="left:633px;top:187px;width:1px;height:3px;background:#000"></div>
<div class="a" style="left:643px;top:183px;width:1px;height:7px;background:#000"></div>
<div class="a" style="left:646px;top:174px;font-size:10px;color:#000">360</div>
<div class="a" style="left:653px;top:187px;width:1px;height:3px;background:#000"></div>
<div class="a" style="left:663px;top:187px;width:1px;height:3px;background:#000"></div>
<div class="a" style="left:673px;top:187px;width:1px;height:3px;background:#000"></div>
<div class="a" style="left:683px;top:173px;width:1px;height:17px;background:#000"></div>
<div class="a" style="left:686px;top:174px;font-size:10px;color:#000">400</div>
<div class="a" style="left:693px;top:187px;width:1px;height:3px;background:#000"></div>
<div class="a" style="left:703px;top:187px;width:1px;height:3px;background:#000"></div>
<div class="a" style="left:713px;top:187px;width:1px;height:3px;background:#000"></div>
<div class="a" style="left:723px;top:183px;width:1px;height:7px;background:#000"></div>
<div class="a" style="left:726px;top:174px;font-size:10px;color:#000">440</div>
<div class="a" style="left:733px;top:187px;width:1px;height:3px;background:#000"></div>
<div class="a" style="left:743px;top:187px;width:1px;height:3px;background:#000"></div>
<div class="a" style="left:753px;top:187px;width:1px;height:3px;background:#000"></div>
<div class="a" style="left:763px;top:173px;width:1px;height:17px;background:#000"></div>
<div class="a" style="left:766px;top:174px;font-size:10px;color:#000">480</div>
<div class="a" style="left:773px;top:187px;width:1px;height:3px;background:#000"></div>
<div class="a" style="left:783px;top:187px;width:1px;height:3px;background:#000"></div>
<div class="a" style="left:793px;top:187px;width:1px;height:3px;background:#000"></div>
<div class="a" style="left:803px;top:183px;width:1px;height:7px;background:#000"></div>
<div class="a" style="left:806px;top:174px;font-size:10px;color:#000">520</div>
<div class="a" style="left:813px;top:187px;width:1px;height:3px;background:#000"></div>
<div class="a" style="left:823px;top:187px;width:1px;height:3px;background:#000"></div>
<div class="a" style="left:833px;top:187px;width:1px;height:3px;background:#000"></div>
<div class="a" style="left:843px;top:173px;width:1px;height:17px;background:#000"></div>
<div class="a" style="left:846px;top:174px;font-size:10px;color:#000">560</div>
<div class="a" style="left:853px;top:187px;width:1px;height:3px;background:#000"></div>
<div class="a" style="left:863px;top:187px;width:1px;height:3px;background:#000"></div>
<div class="a" style="left:873px;top:187px;width:1px;height:3px;background:#000"></div>
<div class="a" style="left:883px;top:183px;width:1px;height:7px;background:#000"></div>
<div class="a" style="left:886px;top:174px;font-size:10px;color:#000">600</div>
<div class="a" style="left:893px;top:187px;width:1px;height:3px;background:#000"></div>
<div class="a" style="left:903px;top:187px;width:1px;height:3px;background:#000"></div>
<div class="a" style="left:913px;top:187px;width:1px;height:3px;background:#000"></div>
<div class="a" style="left:923px;top:173px;width:1px;height:17px;background:#000"></div>
<div class="a" style="left:276px;top:201px;width:7px;height:1px;background:#000"></div>
<div class="a" style="left:269px;top:203px;width:9px;height:18px"><div style="position:absolute;left:-4px;top:4px;width:17px;height:10px;transform:rotate(-90deg);font-size:10px;line-height:10px;color:#000;text-align:right">-40</div></div>
<div class="a" style="left:280px;top:211px;width:3px;height:1px;background:#000"></div>
<div class="a" style="left:280px;top:221px;width:3px;height:1px;background:#000"></div>
<div class="a" style="left:280px;top:231px;width:3px;height:1px;background:#000"></div>
<div class="a" style="left:266px;top:241px;width:17px;height:1px;background:#000"></div>
<div class="a" style="left:269px;top:243px;width:9px;height:18px"><div style="position:absolute;left:-4px;top:4px;width:17px;height:10px;transform:rotate(-90deg);font-size:10px;line-height:10px;color:#000;text-align:right">0</div></div>
<div class="a" style="left:280px;top:251px;width:3px;height:1px;background:#000"></div>
<div class="a" style="left:280px;top:261px;width:3px;height:1px;background:#000"></div>
<div class="a" style="left:280px;top:271px;width:3px;height:1px;background:#000"></div>
<div class="a" style="left:276px;top:281px;width:7px;height:1px;background:#000"></div>
<div class="a" style="left:269px;top:283px;width:9px;height:18px"><div style="position:absolute;left:-4px;top:4px;width:17px;height:10px;transform:rotate(-90deg);font-size:10px;line-height:10px;color:#000;text-align:right">40</div></div>
<div class="a" style="left:280px;top:291px;width:3px;height:1px;background:#000"></div>
<div class="a" style="left:280px;top:301px;width:3px;height:1px;background:#000"></div>
<div class="a" style="left:280px;top:311px;width:3px;height:1px;background:#000"></div>
<div class="a" style="left:266px;top:321px;width:17px;height:1px;background:#000"></div>
<div class="a" style="left:269px;top:323px;width:9px;height:18px"><div style="position:absolute;left:-4px;top:4px;width:17px;height:10px;transform:rotate(-90deg);font-size:10px;line-height:10px;color:#000;text-align:right">80</div></div>
<div class="a" style="left:280px;top:331px;width:3px;height:1px;background:#000"></div>
<div class="a" style="left:280px;top:341px;width:3px;height:1px;background:#000"></div>
<div class="a" style="left:280px;top:351px;width:3px;height:1px;background:#000"></div>
<div class="a" style="left:276px;top:361px;width:7px;height:1px;background:#000"></div>
<div class="a" style="left:269px;top:363px;width:9px;height:18px"><div style="position:absolute;left:-4px;top:4px;width:17px;height:10px;transform:rotate(-90deg);font-size:10px;line-height:10px;color:#000;text-align:right">120</div></div>
<div class="a" style="left:280px;top:371px;width:3px;height:1px;background:#000"></div>
<div class="a" style="left:280px;top:381px;width:3px;height:1px;background:#000"></div>
<div class="a" style="left:280px;top:391px;width:3px;height:1px;background:#000"></div>
<div class="a" style="left:266px;top:401px;width:17px;height:1px;background:#000"></div>
<div class="a" style="left:269px;top:403px;width:9px;height:18px"><div style="position:absolute;left:-4px;top:4px;width:17px;height:10px;transform:rotate(-90deg);font-size:10px;line-height:10px;color:#000;text-align:right">160</div></div>
<div class="a" style="left:280px;top:411px;width:3px;height:1px;background:#000"></div>
<div class="a" style="left:280px;top:421px;width:3px;height:1px;background:#000"></div>
<div class="a" style="left:280px;top:431px;width:3px;height:1px;background:#000"></div>
<div class="a" style="left:276px;top:441px;width:7px;height:1px;background:#000"></div>
<div class="a" style="left:269px;top:443px;width:9px;height:18px"><div style="position:absolute;left:-4px;top:4px;width:17px;height:10px;transform:rotate(-90deg);font-size:10px;line-height:10px;color:#000;text-align:right">200</div></div>
<div class="a" style="left:280px;top:451px;width:3px;height:1px;background:#000"></div>
<div class="a" style="left:280px;top:461px;width:3px;height:1px;background:#000"></div>
<div class="a" style="left:280px;top:471px;width:3px;height:1px;background:#000"></div>
<div class="a" style="left:266px;top:481px;width:17px;height:1px;background:#000"></div>
<div class="a" style="left:269px;top:483px;width:9px;height:18px"><div style="position:absolute;left:-4px;top:4px;width:17px;height:10px;transform:rotate(-90deg);font-size:10px;line-height:10px;color:#000;text-align:right">240</div></div>
<div class="a" style="left:280px;top:491px;width:3px;height:1px;background:#000"></div>
<div class="a" style="left:280px;top:501px;width:3px;height:1px;background:#000"></div>
<div class="a" style="left:280px;top:511px;width:3px;height:1px;background:#000"></div>
<div class="a" style="left:276px;top:521px;width:7px;height:1px;background:#000"></div>
<div class="a" style="left:269px;top:523px;width:9px;height:18px"><div style="position:absolute;left:-4px;top:4px;width:17px;height:10px;transform:rotate(-90deg);font-size:10px;line-height:10px;color:#000;text-align:right">280</div></div>
<div class="a" style="left:280px;top:531px;width:3px;height:1px;background:#000"></div>
<div class="a" style="left:280px;top:541px;width:3px;height:1px;background:#000"></div>
<div class="a" style="left:280px;top:551px;width:3px;height:1px;background:#000"></div>
<div class="a" style="left:266px;top:561px;width:17px;height:1px;background:#000"></div>
<div class="a" style="left:269px;top:563px;width:9px;height:18px"><div style="position:absolute;left:-4px;top:4px;width:17px;height:10px;transform:rotate(-90deg);font-size:10px;line-height:10px;color:#000;text-align:right">320</div></div>
<div class="a" style="left:280px;top:571px;width:3px;height:1px;background:#000"></div>
<div class="a" style="left:280px;top:581px;width:3px;height:1px;background:#000"></div>
<div class="a" style="left:280px;top:591px;width:3px;height:1px;background:#000"></div>
<div class="a" style="left:276px;top:601px;width:7px;height:1px;background:#000"></div>
<div class="a" style="left:269px;top:603px;width:9px;height:18px"><div style="position:absolute;left:-4px;top:4px;width:17px;height:10px;transform:rotate(-90deg);font-size:10px;line-height:10px;color:#000;text-align:right">360</div></div>
<div class="a" style="left:280px;top:611px;width:3px;height:1px;background:#000"></div>
<div class="a" style="left:280px;top:621px;width:3px;height:1px;background:#000"></div>
<div class="a" style="left:280px;top:631px;width:3px;height:1px;background:#000"></div>
<div class="a" style="left:266px;top:641px;width:17px;height:1px;background:#000"></div>
<div class="a" style="left:269px;top:643px;width:9px;height:18px"><div style="position:absolute;left:-4px;top:4px;width:17px;height:10px;transform:rotate(-90deg);font-size:10px;line-height:10px;color:#000;text-align:right">400</div></div>
<div class="a" style="left:280px;top:651px;width:3px;height:1px;background:#000"></div>
<div class="a" style="left:280px;top:661px;width:3px;height:1px;background:#000"></div>
<div class="a" style="left:280px;top:671px;width:3px;height:1px;background:#000"></div>
<div class="a" style="left:267px;top:446px;width:16px;height:1px;background:#444"></div>
<div class="a" style="left:284px;top:191px;width:639px;height:487px;background:#5f5f5f"></div>
<div class="a" style="left:923px;top:191px;width:3px;height:487px;background:#8a8a8a"></div>
<div class="a" style="left:284px;top:241px;width:639px;height:364px;background-color:#3a4d78"></div>
<div class="a" style="left:266px;top:678px;width:660px;height:1px;background:#e8eef6"></div>
<div class="a" style="left:284px;top:240px;width:639px;height:1px;background:#4a4e58"></div>
<div class="a" style="left:284px;top:240px;width:639px;height:365px;background-image:linear-gradient(90deg,#d8c898 1px,transparent 1px),linear-gradient(180deg,transparent 0,transparent 100%);background-size:10px 10px;background-position:9px 0;-webkit-mask-image:linear-gradient(180deg,#000 1px,transparent 1px);-webkit-mask-size:10px 10px"></div>
<div class="a" style="left:700px;top:201px;width:105px;height:35px;border:2px solid #1a4a86;border-radius:4px;background:linear-gradient(180deg,#fafafa 0,#e6e6e6 50%,#c6c6c6 100%)"></div>
<div class="a" style="left:853px;top:206px;font-size:14px;color:#fff;white-space:nowrap;transform:scaleX(.85);transform-origin:0 0">1</div>
<div class="a" style="left:863px;top:206px;font-size:14px;color:#fff;white-space:nowrap;transform:scaleX(.85);transform-origin:0 0">%</div>
<div class="a" style="left:812px;top:225px;width:104px;height:8px;background:#e9e7ee"></div>
<div class="a" style="left:813px;top:226px;width:1px;height:6px;background:#3a8af0"></div>
<div class="a" style="left:443px;top:510px;width:161px;height:51px;background:#b0b0b0;border-top:2px solid #fff;border-left:2px solid #fff;border-right:2px solid #000;border-bottom:2px solid #000"></div>
<div class="a" style="left:443px;top:510px;width:161px;height:51px;line-height:51px;text-align:center;font-size:14.5px;color:#111">Top Page</div>
<div class="a" style="left:643px;top:510px;width:161px;height:51px;background:#b0b0b0;border-top:2px solid #fff;border-left:2px solid #fff;border-right:2px solid #000;border-bottom:2px solid #000"></div>
<div class="a" style="left:643px;top:510px;width:161px;height:51px;line-height:51px;text-align:center;font-size:14.5px;color:#111">Panel1 (Folder2)</div>
<div class="a" style="left:440px;top:507px;width:7px;height:7px;background:#000;border:1px solid #fff"></div>
<div class="a" style="left:440px;top:532px;width:7px;height:7px;background:#000;border:1px solid #fff"></div>
<div class="a" style="left:440px;top:557px;width:7px;height:7px;background:#000;border:1px solid #fff"></div>
<div class="a" style="left:520px;top:507px;width:7px;height:7px;background:#000;border:1px solid #fff"></div>
<div class="a" style="left:520px;top:557px;width:7px;height:7px;background:#000;border:1px solid #fff"></div>
<div class="a" style="left:600px;top:507px;width:7px;height:7px;background:#000;border:1px solid #fff"></div>
<div class="a" style="left:600px;top:532px;width:7px;height:7px;background:#000;border:1px solid #fff"></div>
<div class="a" style="left:600px;top:557px;width:7px;height:7px;background:#000;border:1px solid #fff"></div>
<div class="a" style="left:834px;top:609px;width:86px;height:24px;border:1px solid #1a4a86;border-radius:12px;background:linear-gradient(180deg,#ffffff 0,#f4f4f8 50%,#dcdae6 100%)"></div>
<svg style="left:845px;top:616px" width="12" height="11" viewBox="0 0 12 11"><rect x="0.5" y="0.5" width="10" height="10" fill="#fff" stroke="#8a8a8a"/><path d="M2.5 8.5l5-5" stroke="#707070" stroke-width="1.5"/><path d="M4.5 3h4.5v4.5z" fill="#707070"/></svg>
<div class="a" style="left:861px;top:614px;font-size:12px;color:#000">Shotcut</div>
<div class="a" style="left:287px;top:637px;width:81px;height:36px;border:1.5px solid #1a4a86;border-radius:3px;background:linear-gradient(180deg,#fdfdfd 0,#ededed 40%,#d2d2d2 100%);box-shadow:inset 1px 1px 0 #fff"></div>
<div class="a" style="left:373px;top:637px;width:89px;height:36px;border:1.5px solid #1a4a86;border-radius:3px;background:linear-gradient(180deg,#fdfdfd 0,#ededed 40%,#d2d2d2 100%);box-shadow:inset 1px 1px 0 #fff"></div>
<div class="a" style="left:466px;top:637px;width:88px;height:36px;border:1.5px solid #1a4a86;border-radius:3px;background:linear-gradient(180deg,#fdfdfd 0,#ededed 40%,#d2d2d2 100%);box-shadow:inset 1px 1px 0 #fff"></div>
<div class="a" style="left:558px;top:637px;width:88px;height:36px;border:1.5px solid #1a4a86;border-radius:3px;background:linear-gradient(180deg,#fdfdfd 0,#ededed 40%,#d2d2d2 100%);box-shadow:inset 1px 1px 0 #fff"></div>
<div class="a" style="left:650px;top:637px;width:88px;height:36px;border:1.5px solid #1a4a86;border-radius:3px;background:linear-gradient(180deg,#fdfdfd 0,#ededed 40%,#d2d2d2 100%);box-shadow:inset 1px 1px 0 #fff"></div>
<div class="a" style="left:742px;top:637px;width:88px;height:36px;border:1.5px solid #1a4a86;border-radius:3px;background:linear-gradient(180deg,#fdfdfd 0,#ededed 40%,#d2d2d2 100%);box-shadow:inset 1px 1px 0 #fff"></div>
<div class="a" style="left:833px;top:637px;width:89px;height:36px;border:1.5px solid #1a4a86;border-radius:3px;background:linear-gradient(180deg,#fdfdfd 0,#ededed 40%,#d2d2d2 100%);box-shadow:inset 1px 1px 0 #fff"></div>
<div class="a" style="left:322px;top:643px;width:10px;height:10px;border-radius:50%;background:radial-gradient(circle at 40% 35%,#a8a8a8 0,#7a7a7a 50%,#555 100%)"></div>
<div class="a" style="left:309px;top:655px;font-size:12.5px;color:#111;letter-spacing:0.6px;transform:scaleX(.86);transform-origin:0 0">SHIFT</div>
<div class="a" style="left:926px;top:191px;width:2px;height:488px;background:#fff"></div>
<div class="a" style="left:933px;top:113px;width:2px;height:587px;background:#f8f8f8"></div>
<div class="a" style="left:935px;top:29px;width:1px;height:692px;background:#4a5560"></div>
<div class="a" style="left:281px;top:137px;width:502px;height:266px;border:1px solid #2b3442;border-radius:6px 6px 0 0;background:linear-gradient(180deg,#a3bfe0 0,#a9c4e4 15px,#b6cde9 30px,#bfd4ee 100%)"></div>
<div class="a" style="left:282px;top:138px;width:500px;height:264px;border:1px solid rgba(255,255,255,.45);border-radius:5px 5px 0 0;border-bottom:none"></div>
<div class="a" style="left:282px;top:401px;width:500px;height:1px;background:#49c4e4"></div>
<div class="a" style="left:781px;top:150px;width:1px;height:252px;background:linear-gradient(180deg,rgba(73,196,228,0),#49c4e4 60px)"></div>
<svg style="left:292px;top:147px" width="13" height="16" viewBox="0 0 13 16"><path d="M0.5 0.5h8.5l3.5 3.5v11.5h-12z" fill="#fff" stroke="#606060"/><path d="M9 0.5v3.5h3.5" fill="none" stroke="#606060"/><path d="M3 6h6" stroke="#0a0" stroke-width="1.2"/><rect x="10" y="5.5" width="1" height="1" fill="#0a0"/><path d="M2.5 8.5h8M2.5 10.5h8" stroke="#555" stroke-width=".8"/></svg>
<div class="a" style="left:311px;top:150px;font-size:11.5px;color:#000;white-space:nowrap">Source - Panel1</div>
<div class="a" style="left:676px;top:147px;width:31px;height:17px;border:1px solid #4e6383;border-radius:3px;background:linear-gradient(180deg,#d9e5f3 0,#c1d3ea 50%,#a3bddc 51%,#b9cfe9 100%);box-shadow:inset 0 0 0 1px rgba(255,255,255,.5)"></div>
<div class="a" style="left:709px;top:147px;width:31px;height:17px;border:1px solid #4e6383;border-radius:3px;background:linear-gradient(180deg,#d9e5f3 0,#c1d3ea 50%,#a3bddc 51%,#b9cfe9 100%);box-shadow:inset 0 0 0 1px rgba(255,255,255,.5)"></div>
<div class="a" style="left:742px;top:147px;width:31px;height:17px;border:1px solid #5a1e1e;border-radius:3px;background:linear-gradient(180deg,#eab0a4 0,#d9806c 50%,#c4432a 51%,#d26a50 100%);box-shadow:inset 0 0 0 1px rgba(255,255,255,.35)"></div>
<div class="a" style="left:686px;top:156px;width:11px;height:4px;background:#fff;border:1px solid #3a3a4a"></div>
<div class="a" style="left:719px;top:151px;width:11px;height:9px;background:#fff;border:1px solid #3a3a4a"></div>
<div class="a" style="left:722px;top:154px;width:5px;height:3px;background:#8aa0c0;border:1px solid #3a3a4a"></div>
<svg style="left:751px;top:150px" width="14" height="11"><path d="M2.5 1.5l9 8M11.5 1.5l-9 8" stroke="#3a2a2a" stroke-width="3.8"/><path d="M2.5 1.5l9 8M11.5 1.5l-9 8" stroke="#fff" stroke-width="2.2"/></svg>
<div class="a" style="left:289px;top:167px;width:487px;height:226px;background:#f0f0f0;border-top:1px solid #d8dde4"></div>
<svg style="left:291px;top:170px" width="8" height="24" fill="#bdbdbd"><rect x="2" y="0" width="1" height="1"/><rect x="1" y="1" width="1" height="1"/><rect x="7" y="0" width="1" height="1"/><rect x="6" y="1" width="1" height="1"/><rect x="2" y="4" width="1" height="1"/><rect x="1" y="5" width="1" height="1"/><rect x="7" y="4" width="1" height="1"/><rect x="6" y="5" width="1" height="1"/><rect x="2" y="8" width="1" height="1"/><rect x="1" y="9" width="1" height="1"/><rect x="7" y="8" width="1" height="1"/><rect x="6" y="9" width="1" height="1"/><rect x="2" y="12" width="1" height="1"/><rect x="1" y="13" width="1" height="1"/><rect x="7" y="12" width="1" height="1"/><rect x="6" y="13" width="1" height="1"/><rect x="2" y="16" width="1" height="1"/><rect x="1" y="17" width="1" height="1"/><rect x="7" y="16" width="1" height="1"/><rect x="6" y="17" width="1" height="1"/><rect x="2" y="20" width="1" height="1"/><rect x="1" y="21" width="1" height="1"/><rect x="7" y="20" width="1" height="1"/><rect x="6" y="21" width="1" height="1"/></svg>
<svg style="left:301px;top:174px" width="16" height="16" viewBox="0 0 16 16"><rect x="5.5" y="0.5" width="5" height="2" rx="1" fill="#fff" stroke="#000"/><path d="M0 2.5h16v2.5l-0.8 7.5l-1.7 1.5h-11l-1.7-1.5l-0.8-7.5z" fill="#000"/><path d="M1.5 3.5h12" stroke="#e0e0e0" stroke-width=".8" stroke-dasharray="2 1"/><path d="M2 5v6.5l1 1h10l1-1V5" fill="none" stroke="#e8e8e8" stroke-width=".8"/><rect x="3" y="5" width="10" height="6.5" fill="#f4f4f4"/><path d="M13.5 0.5v4M11.5 2.5h4" stroke="#f00" stroke-width="1.4"/><rect x="13" y="4.5" width="1" height="1.2" fill="#ee0"/><rect x="13" y="5.7" width="1" height="1.5" fill="#0c0"/></svg>
<div class="a" style="left:325px;top:171px;width:1px;height:22px;background:#a8a8a8"></div><div class="a" style="left:326px;top:171px;width:1px;height:22px;background:#fff"></div>
<div class="a" style="left:329px;top:170px;width:200px;height:24px;border:1px solid #8e8f8f;border-radius:3px;background:linear-gradient(180deg,#f4f4f4 0,#ececec 48%,#dedede 52%,#d4d4d4 100%);box-shadow:inset 0 0 0 1px #fcfcfc"></div>
<div class="a" style="left:333px;top:174px;font-size:13px;font-weight:bold;color:#000">PB1</div>
<svg style="left:517px;top:180px" width="8" height="5"><path d="M0 0h7.5L3.75 4.5z" fill="#000"/></svg>
<div class="a" style="left:537px;top:170px;width:200px;height:24px;border:1px solid #8e8f8f;border-radius:3px;background:linear-gradient(180deg,#f4f4f4 0,#ececec 48%,#dedede 52%,#d4d4d4 100%);box-shadow:inset 0 0 0 1px #fcfcfc"></div>
<div class="a" style="left:541px;top:174px;font-size:13px;font-weight:bold;color:#000">CLICKED</div>
<svg style="left:725px;top:180px" width="8" height="5"><path d="M0 0h7.5L3.75 4.5z" fill="#000"/></svg>
<div class="a" style="left:532px;top:171px;width:1px;height:22px;background:#c8c8c8"></div><div class="a" style="left:534px;top:171px;width:1px;height:22px;background:#c8c8c8"></div>
<div class="a" style="left:741px;top:171px;width:1px;height:22px;background:#a8a8a8"></div><div class="a" style="left:742px;top:171px;width:1px;height:22px;background:#fff"></div>
<svg style="left:748px;top:173px" width="16" height="16" viewBox="0 0 16 16"><path d="M6 2.5h9M8 5.5h7M8 8.5h7M8 11.5h7M6 14.5h9" stroke="#a0a0a0"/><path d="M1 8h5M4 6l2 2-2 2" fill="none" stroke="#a0a0a0"/></svg>
<svg style="left:770px;top:173px" width="6" height="16" viewBox="0 0 6 16"><path d="M5 8H1M3 6L1 8l2 2" fill="none" stroke="#a0a0a0"/></svg>
<div class="a" style="left:289px;top:196px;width:487px;height:197px;background:#fff;border-top:2px solid #707070;border-left:2px solid #707070"></div>
<div class="a" style="left:291px;top:198px;width:60px;height:178px;background:#f0f0f0"></div>
<div class="a" style="left:311px;top:200px;font-size:10px;color:#1c50d0;letter-spacing:0.2px;-webkit-text-stroke:0.25px #1c50d0">00001</div>
<div class="a" style="left:311px;top:215px;font-size:10px;color:#1c50d0;letter-spacing:0.2px;-webkit-text-stroke:0.25px #1c50d0">00002</div>
<div class="a" style="left:311px;top:230px;font-size:10px;color:#1c50d0;letter-spacing:0.2px;-webkit-text-stroke:0.25px #1c50d0">00003</div>
<div class="a" style="left:311px;top:245px;font-size:10px;color:#1c50d0;letter-spacing:0.2px;-webkit-text-stroke:0.25px #1c50d0">00004</div>
<div class="a" style="left:311px;top:260px;font-size:10px;color:#1c50d0;letter-spacing:0.2px;-webkit-text-stroke:0.25px #1c50d0">00005</div>
<div class="a" style="left:311px;top:275px;font-size:10px;color:#1c50d0;letter-spacing:0.2px;-webkit-text-stroke:0.25px #1c50d0">00006</div>
<div class="a" style="left:311px;top:290px;font-size:10px;color:#1c50d0;letter-spacing:0.2px;-webkit-text-stroke:0.25px #1c50d0">00007</div>
<div class="a" style="left:311px;top:305px;font-size:10px;color:#1c50d0;letter-spacing:0.2px;-webkit-text-stroke:0.25px #1c50d0">00008</div>
<div class="a" style="left:311px;top:320px;font-size:10px;color:#1c50d0;letter-spacing:0.2px;-webkit-text-stroke:0.25px #1c50d0">00009</div>
<div class="a" style="left:311px;top:335px;font-size:10px;color:#1c50d0;letter-spacing:0.2px;-webkit-text-stroke:0.25px #1c50d0">00010</div>
<div class="a" style="left:311px;top:350px;font-size:10px;color:#1c50d0;letter-spacing:0.2px;-webkit-text-stroke:0.25px #1c50d0">00011</div>
<div class="a" style="left:351px;top:199px;font-family:'Liberation Mono',monospace;font-size:13.33px;font-weight:bold;white-space:pre;color:#000"><span style="color:#f00">#</span><span style="color:#0000f0">include</span> <span style="color:#f00">&lt;</span>PanelMain.h<span style="color:#f00">&gt;</span> raw</div>
<div class="a" style="left:351px;top:229px;font-family:'Liberation Mono',monospace;font-size:13.33px;font-weight:bold;white-space:pre;color:#000"><span style="color:#0000f0">Sub</span> PB1_CLICKED()</div>
<div class="a" style="left:351px;top:244px;font-family:'Liberation Mono',monospace;font-size:13.33px;font-weight:bold;white-space:pre;color:#000">    <span style="color:#0000f0">PageChange</span> <span style="color:#f00">\</span>Main</div>
<div class="a" style="left:351px;top:259px;font-family:'Liberation Mono',monospace;font-size:13.33px;font-weight:bold;white-space:pre;color:#000"><span style="color:#0000f0">End</span> <span style="color:#0000f0">Sub</span></div>
<div class="a" style="left:351px;top:304px;font-family:'Liberation Mono',monospace;font-size:13.33px;font-weight:bold;white-space:pre;color:#000"><span style="color:#0000f0">Sub</span> PB2_CLICKED()</div>
<div class="a" style="left:351px;top:319px;font-family:'Liberation Mono',monospace;font-size:13.33px;font-weight:bold;white-space:pre;color:#000">    <span style="color:#0000f0">PageChange</span> Folder2<span style="color:#f00">\</span>Panel1</div>
<div class="a" style="left:351px;top:334px;font-family:'Liberation Mono',monospace;font-size:13.33px;font-weight:bold;white-space:pre;color:#000"><span style="color:#0000f0">End</span> <span style="color:#0000f0">Sub</span></div>
<div class="a" style="left:351px;top:230px;width:1px;height:14px;background:#000"></div>
<div class="a" style="left:757px;top:198px;width:17px;height:195px;background:#f0f0f0;border-left:1px solid #f8f8f8"></div>
<svg style="left:757px;top:198px" width="19" height="17"><path d="M6 11h7L9.5 7.5z" fill="#7a7a7a"/></svg>
<svg style="left:757px;top:359px" width="19" height="17"><path d="M6 6h7L9.5 9.5z" fill="#7a7a7a"/></svg>
<div class="a" style="left:291px;top:376px;width:466px;height:17px;background:#f0f0f0;border-top:1px solid #e8e8e8"></div>
<svg style="left:293px;top:377px" width="17" height="16"><path d="M10 4.5v7L6.5 8z" fill="#404040"/></svg>
<div class="a" style="left:309px;top:377px;width:15px;height:15px;border:1px solid #8a8a8a;border-radius:2px;background:linear-gradient(180deg,#f2f2f2,#d8d8d8)"></div>
<div class="a" style="left:773px;top:198px;width:2px;height:195px;background:#fff"></div>
<svg style="left:762px;top:383px" width="9" height="9" fill="#a0a0a0"><rect x="6" y="0" width="2" height="2"/><rect x="3" y="3" width="2" height="2"/><rect x="6" y="3" width="2" height="2"/><rect x="0" y="6" width="2" height="2"/><rect x="3" y="6" width="2" height="2"/><rect x="6" y="6" width="2" height="2"/></svg>
<svg style="left:740px;top:377px" width="17" height="16"><path d="M6 4.5v7L9.5 8z" fill="#404040"/></svg>
<!-- STATUS -->
<div class="a" style="left:9px;top:699px;width:246px;height:1px;background:#a0a0a0"></div><div class="a" style="left:255px;top:699px;width:680px;height:1px;background:#fff"></div>
<div class="a" style="left:9px;top:700px;width:926px;height:19px;background:#f0eeec;border-top:1px solid #fff"></div>
<div class="a" style="left:10px;top:706px;font-size:11.5px">Ready</div>
<div class="a" style="left:662px;top:706px;font-size:11.5px">X:</div>
<div class="a" style="left:679px;top:706px;width:16px;overflow:hidden;white-space:nowrap;font-size:11.5px">642</div>
<div class="a" style="left:699px;top:706px;font-size:11.5px">Y:</div>
<div class="a" style="left:718px;top:706px;width:15px;overflow:hidden;white-space:nowrap;font-size:11.5px">206</div>
<div class="a" style="left:879px;top:706px;font-size:11.5px">RC8</div>
<div class="a" style="left:694px;top:702px;width:1px;height:17px;background:#d0ceca"></div>
<div class="a" style="left:732px;top:702px;width:1px;height:17px;background:#d0ceca"></div>
<div class="a" style="left:773px;top:702px;width:1px;height:17px;background:#d0ceca"></div>
<div class="a" style="left:803px;top:702px;width:1px;height:17px;background:#d0ceca"></div>
<div class="a" style="left:839px;top:702px;width:1px;height:17px;background:#d0ceca"></div>
<div class="a" style="left:874px;top:702px;width:1px;height:17px;background:#d0ceca"></div>
<div class="a" style="left:915px;top:702px;width:1px;height:17px;background:#d0ceca"></div>
<svg style="left:922px;top:708px" width="12" height="11" fill="#b8b8b8"><rect x="8" y="0" width="2" height="2"/><rect x="4" y="4" width="2" height="2"/><rect x="8" y="4" width="2" height="2"/><rect x="0" y="8" width="2" height="2"/><rect x="4" y="8" width="2" height="2"/><rect x="8" y="8" width="2" height="2"/></svg>
<div class="a" style="left:8px;top:719px;width:927px;height:1px;background:#fff"></div><div class="a" style="left:7px;top:720px;width:929px;height:1px;background:#5a6878"></div><div class="a" style="left:8px;top:700px;width:1px;height:19px;background:#fff"></div>

</body></html>
